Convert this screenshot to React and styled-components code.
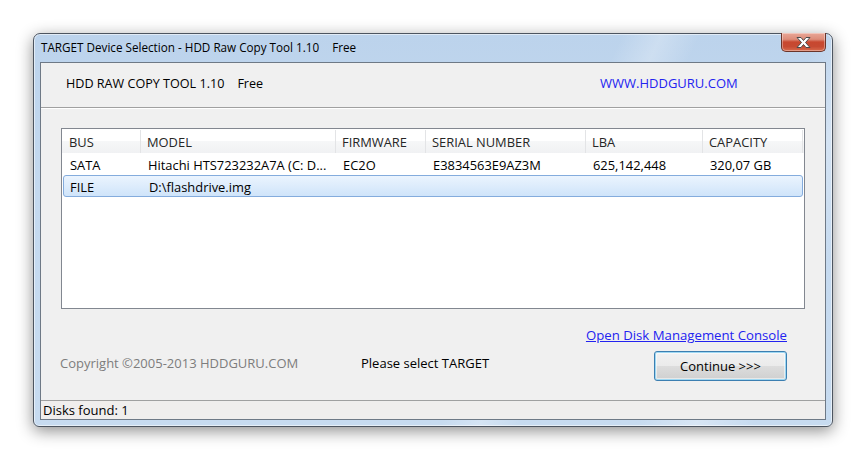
import React from "react";
import styled, { createGlobalStyle } from "styled-components";

const GlobalStyle = createGlobalStyle`
  html, body {
    margin: 0;
    padding: 0;
    background: #ffffff;
  }
  body {
    font-family: "Open Sans", "Noto Sans", "DejaVu Sans", sans-serif;
    font-size: 12px;
    color: #000;
  }
`;

const columns = [
  { key: "bus", title: "BUS" },
  { key: "model", title: "MODEL" },
  { key: "firmware", title: "FIRMWARE" },
  { key: "serial", title: "SERIAL NUMBER" },
  { key: "lba", title: "LBA" },
  { key: "capacity", title: "CAPACITY" },
];

const disks = [
  {
    bus: "SATA",
    model: "Hitachi HTS723232A7A (C: D...",
    firmware: "EC2O",
    serial: "E3834563E9AZ3M",
    lba: "625,142,448",
    capacity: "320,07 GB",
  },
  { bus: "FILE", model: "D:\\flashdrive.img", selected: true },
];

const App = () => {
  return (
    <Page>
      <GlobalStyle />
      <Window>
        <TitleBar>
          <TitleText>
            TARGET Device Selection - HDD Raw Copy Tool 1.10
            <Gap>Free</Gap>
          </TitleText>
          <CloseButton>
            <svg width="19" height="13" viewBox="0 0 19 13">
              <path
                d="M3 1.5h4l2.5 3 2.5-3h4l-4.5 5 4.5 5h-4l-2.5-3-2.5 3h-4l4.5-5z"
                fill="#ffffff"
                stroke="#4a4a4a"
                strokeWidth="1"
                strokeLinejoin="round"
              />
            </svg>
          </CloseButton>
        </TitleBar>
        <Client>
          <Header>
            <Product>
              HDD RAW COPY TOOL 1.10
              <Gap>Free</Gap>
            </Product>
            <Site>WWW.HDDGURU.COM</Site>
          </Header>
          <Body>
            <ListBox>
              <HeaderRow>
                {columns.map((c, i) => (
                  <HeaderCell key={c.key} first={i === 0}>
                    {c.title}
                  </HeaderCell>
                ))}
              </HeaderRow>
              {disks.map((d) => (
                <Row key={d.bus} selected={d.selected}>
                  {columns.map((c) => (
                    <Cell key={c.key}>{d[c.key] || ""}</Cell>
                  ))}
                </Row>
              ))}
            </ListBox>
            <Footer>
              <LinkRow>
                <ConsoleLink href="#">Open Disk Management Console</ConsoleLink>
              </LinkRow>
              <ActionRow>
                <Copyright>Copyright ©2005-2013 HDDGURU.COM</Copyright>
                <Prompt>Please select TARGET</Prompt>
                <ContinueButton>Continue &gt;&gt;&gt;</ContinueButton>
              </ActionRow>
            </Footer>
          </Body>
          <StatusBar>Disks found: 1</StatusBar>
        </Client>
      </Window>
    </Page>
  );
};

export default App;

const Page = styled.div`
  width: 866px;
  height: 460px;
  box-sizing: border-box;
  padding: 33px 0 0 33px;
`;

const Window = styled.div`
  width: 800px;
  height: 394px;
  box-sizing: border-box;
  display: flex;
  flex-direction: column;
  padding: 0 6px 6px 6px;
  border: 1px solid #4d5560;
  border-radius: 7px 7px 6px 6px;
  background:
    linear-gradient(115deg, rgba(255,255,255,0) 60%, rgba(255,255,255,0.25) 64%, rgba(255,255,255,0) 68%, rgba(255,255,255,0) 80%, rgba(255,255,255,0.3) 86%, rgba(255,255,255,0) 92%),
    linear-gradient(180deg, #bcd3ec 0%, #c4d9ef 40%, #c7dbf0 100%);
  box-shadow: 0 4px 16px rgba(0, 0, 0, 0.45), inset 0 0 0 1px rgba(255, 255, 255, 0.55);
`;

const TitleBar = styled.div`
  height: 28px;
  display: flex;
  justify-content: space-between;
  align-items: flex-start;
  padding-left: 1px;
`;

const TitleText = styled.div`
  margin-top: 5px;
  font-size: 11.7px;
  line-height: 17px;
  color: #000;
  white-space: pre;
`;

const Gap = styled.span`
  margin-left: 13px;
`;

const CloseButton = styled.div`
  width: 45px;
  height: 19px;
  margin-top: -1px;
  box-sizing: border-box;
  display: flex;
  align-items: center;
  justify-content: center;
  border: 1px solid #6b3429;
  border-top: none;
  border-radius: 0 0 5px 5px;
  background: linear-gradient(180deg, #e9a797 0%, #dd8c79 35%, #c8472f 50%, #c64a32 75%, #d86b4d 100%);
  box-shadow: inset 0 0 0 1px rgba(255, 255, 255, 0.35);
`;

const Client = styled.div`
  flex: 1;
  display: flex;
  flex-direction: column;
  border: 1px solid #6e7986;
  background: #f0f0f0;
`;

const Header = styled.div`
  height: 45px;
  box-sizing: border-box;
  display: grid;
  grid-template-columns: 534px auto;
  align-items: center;
  padding: 0 0 4px 25px;
  border-bottom: 1px solid #a0a0a0;
  box-shadow: 0 1px 0 #ffffff;
  font-size: 13px;
`;

const Product = styled.div`
  color: #000;
  white-space: pre;
  font-size: 12.6px;
`;

const Site = styled.div`
  color: #2323f0;
`;

const Body = styled.div`
  flex: 1;
  display: flex;
  flex-direction: column;
  padding-top: 20px;
`;

const ListBox = styled.div`
  height: 181px;
  box-sizing: border-box;
  margin: 0 20px;
  border: 1px solid #828790;
  background: #ffffff;
  font-size: 12.9px;
`;

const gridCols = "79px 195px 90px 160px 117px 100px";

const HeaderRow = styled.div`
  display: grid;
  grid-template-columns: ${gridCols};
  height: 24px;
  box-sizing: border-box;
  padding-top: 1px;
  background: linear-gradient(180deg, #ffffff 0%, #ffffff 50%, #f6f7f8 51%, #f0f1f3 100%);
`;

const HeaderCell = styled.div`
  display: flex;
  align-items: center;
  padding-left: ${(p) => (p.first ? "7px" : "6px")};
  border-right: 1px solid #e3e4e6;
  color: #262626;
  white-space: nowrap;
  overflow: hidden;
`;

const Row = styled.div`
  display: grid;
  grid-template-columns: ${gridCols};
  height: 22px;
  box-sizing: border-box;
  padding-top: 1px;
  margin: ${(p) => (p.selected ? "0 1px" : "0")};
  border: 1px solid ${(p) => (p.selected ? "#84acdd" : "transparent")};
  border-radius: 3px;
  background: ${(p) =>
    p.selected ? "linear-gradient(180deg, #ebf4fe 0%, #cfe4fa 100%)" : "transparent"};
  & > div:first-child {
    padding-left: ${(p) => (p.selected ? "6px" : "7px")};
  }
`;

const Cell = styled.div`
  display: flex;
  align-items: center;
  padding-left: 6px;
  white-space: nowrap;
  overflow: hidden;
`;

const Footer = styled.div`
  flex: 1;
  display: flex;
  flex-direction: column;
  padding: 18px 38px 0 19px;
  font-size: 13px;
`;

const LinkRow = styled.div`
  display: flex;
  justify-content: flex-end;
`;

const ConsoleLink = styled.a`
  color: #2323f0;
  text-decoration: underline;
  line-height: 17px;
  font-size: 13.2px;
`;

const ActionRow = styled.div`
  display: grid;
  grid-template-columns: 301px 1fr auto;
  align-items: center;
  margin-top: 7px;
`;

const Copyright = styled.div`
  color: #7d7d7d;
  padding-bottom: 6px;
`;

const Prompt = styled.div`
  color: #000;
  padding-bottom: 6px;
`;

const ContinueButton = styled.button`
  width: 133px;
  height: 30px;
  box-sizing: border-box;
  font-family: inherit;
  font-size: 13px;
  color: #000;
  border: 1px solid #3c7fb1;
  border-radius: 3px;
  background: linear-gradient(180deg, #f2f2f2 0%, #ebebeb 50%, #dddddd 51%, #cfcfcf 100%);
  box-shadow: inset 0 0 0 1px #9fd8f2, inset 0 0 0 2px rgba(255, 255, 255, 0.5);
  padding: 0;
`;

const StatusBar = styled.div`
  height: 19px;
  box-sizing: border-box;
  display: flex;
  align-items: center;
  padding-left: 2px;
  border-top: 1px solid #a0a0a0;
  background: #f0eeed;
  font-size: 13px;
`;
